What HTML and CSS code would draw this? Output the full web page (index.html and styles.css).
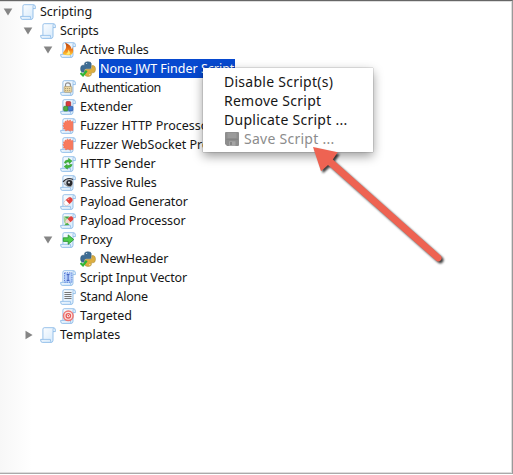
FILE: index.html
```html
<!DOCTYPE html>
<html lang="en">
<head>
<meta charset="utf-8">
<title>Scripting</title>
<link rel="stylesheet" href="styles.css">
</head>
<body>
<svg class="defs" aria-hidden="true">
  <defs>
    <linearGradient id="paper" x1="0" y1="0" x2="1" y2="1">
      <stop offset="0" stop-color="#ffffff"/><stop offset="1" stop-color="#d3e8fb"/>
    </linearGradient>
    <linearGradient id="flame" x1="0" y1="0" x2="0" y2="1">
      <stop offset="0" stop-color="#b8440c"/><stop offset=".55" stop-color="#f07818"/><stop offset="1" stop-color="#ffd23a"/>
    </linearGradient>
    <symbol id="scroll" viewBox="0 0 16 16">
      <path d="M4.2 .7H13.6Q15.5 .8 15.4 3.2V4.6H13V13.4Q12.9 15.4 11 15.4H2.2Q.5 15.3 .6 12.4H2.9V2.2Q2.9 .8 4.2 .7Z" fill="url(#paper)" stroke="#8dbbe8" stroke-width=".9"/>
      <path d="M13 4.6V2.4Q13 1 13.9 .9M3 12.4H10.4Q10.2 15 11.4 15.2" fill="none" stroke="#8dbbe8" stroke-width=".8"/>
    </symbol>
    <symbol id="open" viewBox="0 0 10 8"><path d="M.7 .5H9.3L5 7.6Z" fill="#858585"/></symbol>
    <symbol id="closed" viewBox="0 0 8 10"><path d="M.5 .7V9.3L7.6 5Z" fill="#858585"/></symbol>
    <symbol id="python" viewBox="0 0 16 16">
      <path d="M4.6 2.2Q4.8 .7 7.8 .7Q11.2 .7 11.2 2.6V6.2Q11.2 7.8 9.6 7.8H6Q4.4 7.8 4.4 9.4V11.2H2.5Q.6 11 .6 7.8Q.6 4.4 2.8 4.2H4.6Z" fill="#3f6d94" stroke="#315674" stroke-width=".5"/>
      <path d="M11.8 4.6H13.4Q15.5 5 15.5 8Q15.5 11.6 13.2 11.8H11.4V13.6Q11.2 15.5 8 15.5Q4.8 15.4 4.8 13.3V10Q4.8 8.3 6.6 8.3H10.2Q11.8 8.2 11.8 6.6Z" fill="#dcae40" stroke="#a98a38" stroke-width=".5"/>
      <circle cx="6.6" cy="2.5" r=".6" fill="#dfe9f2"/><circle cx="9.8" cy="13.7" r=".6" fill="#fff3bd"/>
      <path d="M.6 12L3 14.4L6.7 9.8" fill="none" stroke="#2fb535" stroke-width="2.2"/>
    </symbol>
    <symbol id="fire" viewBox="0 0 16 16"><path d="M5 .6Q11.6 3.5 11.3 7.2Q12.2 6.5 12 5Q14.8 10 11.6 12.4Q8 14 3.6 12.6Q2 11.3 4 9.2Q7.9 6 5 .6Z" fill="url(#flame)"/><path d="M5.8 12.2Q8.8 10 8 7.4Q11.4 10.7 9 12.6Z" fill="#ffeb78"/></symbol>
    <symbol id="lock" viewBox="0 0 16 16"><path d="M5.5 7V5.2Q5.5 2.8 8 2.8Q10.5 2.8 10.5 5.2V7" fill="none" stroke="#8e8e8e" stroke-width="1.2"/><rect x="4.2" y="6.6" width="7.6" height="5.6" rx=".7" fill="#efdba4" stroke="#aa946a" stroke-width=".7"/><path d="M5 8.5H11M5 10.4H11" stroke="#9c8c68" stroke-width=".8" stroke-dasharray="1.2 .8"/></symbol>
    <symbol id="blocks" viewBox="0 0 16 16"><rect x="6" y="2.5" width="4.7" height="4.8" rx="1" fill="#d93c3c" stroke="#96252a" stroke-width=".6"/><rect x="3.6" y="7.3" width="4.4" height="4.7" rx="1" fill="#4dae43" stroke="#28742a" stroke-width=".6"/><rect x="8.4" y="7.3" width="4.5" height="4.7" rx="1" fill="#477bd0" stroke="#284d98" stroke-width=".6"/></symbol>
    <symbol id="burst" viewBox="0 0 16 16"><path d="M5 3.1L6.5 3.4L7.4 1.9L8.7 3.1L10.4 2L10.9 3.7L12.9 3.5V12.6H11L9.5 12.9L8 11.9L5.7 13L5.4 11.3L3.5 11L4.1 9.2L2.8 8L4 6.6L3.4 4.9L5 4.7Z" fill="#f8795c" stroke="#ea6950" stroke-width=".5"/></symbol>
    <symbol id="cycle" viewBox="0 0 16 16"><path d="M4.3 7Q4.8 3.7 8.4 3.9L8.5 2.3L12.2 5L9.2 7.7L8.9 6.1Q6.8 5.9 6 7.4ZM12.2 8.6Q11.4 12 7.6 11.8L7.4 13.2L4 10.6L7.1 8.2L7.4 9.6Q9.4 9.8 10.1 8.2Z" fill="#41b53b" stroke="#278b2b" stroke-width=".4"/></symbol>
    <symbol id="eye" viewBox="0 0 16 16"><path d="M3.2 6.6Q7.5 1.8 12.9 5.1V11Q8 13.2 4.2 9.5Z" fill="#c3c8cf"/><path d="M3 6.8Q7.2 1.7 13.1 4.5" fill="none" stroke="#303036" stroke-width="1.1"/><circle cx="9.4" cy="8" r="3.1" fill="#27282d"/><circle cx="9" cy="7.5" r="1.1" fill="#d9dce0"/><path d="M4 8.6Q7 12 11.5 11.7" fill="none" stroke="#777" stroke-width=".7"/></symbol>
    <symbol id="pill" viewBox="0 0 16 16"><g transform="rotate(-42 8 7.5)"><rect x="3.2" y="5" width="9.8" height="5.2" rx="2.6" fill="#fff" stroke="#cfa09e" stroke-width=".5"/><path d="M7.4 5H10.4Q13 5 13 7.6Q13 10.2 10.4 10.2H7.4Z" fill="#e33f3c"/><path d="M8.8 6.2H11" stroke="#ff9e95"/></g></symbol>
    <symbol id="pillgreen" viewBox="0 0 16 16"><path d="M3.5 3.2L9.5 9L6 12.5L4 9Z" fill="#a5d493"/><path d="M4 3.5H9.5L7.3 6.2Z" fill="#45a84a"/><g transform="rotate(-42 9 7.5)"><rect x="5" y="5.3" width="9" height="4.4" rx="2.2" fill="#f5d4ce"/><path d="M9 5.3H12Q14 5.5 14 7.5Q14 9.7 12 9.7H9Z" fill="#e1443f"/></g><path d="M4.1 12.3L9.5 12.1L7.2 9.8Z" fill="#4bad4b"/></symbol>
    <symbol id="forward" viewBox="0 0 16 16"><path d="M3.3 5.8H8.2V2.9L13.8 7.6L8.2 12.3V9.4H3.3Z" fill="#4fce4e" stroke="#23912c" stroke-width=".8"/></symbol>
    <symbol id="vector" viewBox="0 0 16 16"><rect x="4.5" y="2.8" width="7.4" height="9.4" fill="#b5d0fa" stroke="#4e74d6" stroke-width=".9" stroke-dasharray="1.3 1"/><path d="M6.7 4.6H9.5M8.1 4.6V10.4M6.7 10.4H9.5" stroke="#3550b6" stroke-width=".9" fill="none"/></symbol>
    <symbol id="lines" viewBox="0 0 16 16"><path d="M4.4 3.5H11.5M4.4 5.5H11.5M4.4 7.5H11.5M4.4 9.5H11.5" stroke="#777" stroke-width="1.1"/></symbol>
    <symbol id="target" viewBox="0 0 16 16"><circle cx="8.3" cy="7.8" r="4.8" fill="#fbe3e1" stroke="#ee7672" stroke-width="1.5"/><circle cx="8.3" cy="7.8" r="2.2" fill="#fff" stroke="#e75b58" stroke-width="1.3"/><circle cx="8.3" cy="7.8" r=".8" fill="#cf3f42"/></symbol>
  </defs>
</svg>
<main class="panel">
  <ul class="tree">
    <li class="row"><svg class="toggle"><use href="#open"/></svg><svg class="icon"><use href="#scroll"/></svg><span class="label wide">Scripting</span></li>
    <li class="row l1"><svg class="toggle"><use href="#open"/></svg><svg class="icon"><use href="#scroll"/></svg><span class="label">Scripts</span></li>
    <li class="row l2"><svg class="toggle"><use href="#open"/></svg><svg class="icon"><use href="#scroll"/><use href="#fire"/></svg><span class="label">Active Rules</span></li>
    <li class="row l3"><i class="toggle"></i><svg class="icon"><use href="#python"/></svg><span class="label wide selected">None JWT Finder Script</span></li>
    <li class="row l2"><i class="toggle"></i><svg class="icon"><use href="#scroll"/><use href="#lock"/></svg><span class="label tight">Authentication</span></li>
    <li class="row l2"><i class="toggle"></i><svg class="icon"><use href="#scroll"/><use href="#blocks"/></svg><span class="label wide">Extender</span></li>
    <li class="row l2"><i class="toggle"></i><svg class="icon"><use href="#scroll"/><use href="#burst"/></svg><span class="label wide">Fuzzer HTTP Processor</span></li>
    <li class="row l2"><i class="toggle"></i><svg class="icon"><use href="#scroll"/><use href="#burst"/></svg><span class="label wide">Fuzzer WebSocket Processor</span></li>
    <li class="row l2"><i class="toggle"></i><svg class="icon"><use href="#scroll"/><use href="#cycle"/></svg><span class="label wide">HTTP Sender</span></li>
    <li class="row l2"><i class="toggle"></i><svg class="icon"><use href="#scroll"/><use href="#eye"/></svg><span class="label">Passive Rules</span></li>
    <li class="row l2"><i class="toggle"></i><svg class="icon"><use href="#scroll"/><use href="#pill"/></svg><span class="label">Payload Generator</span></li>
    <li class="row l2"><i class="toggle"></i><svg class="icon"><use href="#scroll"/><use href="#pillgreen"/></svg><span class="label">Payload Processor</span></li>
    <li class="row l2"><svg class="toggle"><use href="#open"/></svg><svg class="icon"><use href="#scroll"/><use href="#forward"/></svg><span class="label">Proxy</span></li>
    <li class="row l3"><i class="toggle"></i><svg class="icon"><use href="#python"/></svg><span class="label">NewHeader</span></li>
    <li class="row l2"><i class="toggle"></i><svg class="icon"><use href="#scroll"/><use href="#vector"/></svg><span class="label">Script Input Vector</span></li>
    <li class="row l2"><i class="toggle"></i><svg class="icon"><use href="#scroll"/><use href="#lines"/></svg><span class="label snug">Stand Alone</span></li>
    <li class="row l2"><i class="toggle"></i><svg class="icon"><use href="#scroll"/><use href="#target"/></svg><span class="label wide">Targeted</span></li>
    <li class="row l1"><svg class="toggle shut"><use href="#closed"/></svg><svg class="icon"><use href="#scroll"/></svg><span class="label wide">Templates</span></li>
  </ul>
</main>
<ul class="menu">
  <li class="item">Disable Script(s)</li>
  <li class="item">Remove Script</li>
  <li class="item">Duplicate Script ...</li>
  <li class="item disabled"><svg class="disk" viewBox="0 0 14 14"><path d="M1 0H13Q14 0 14 1V13Q14 14 13 14H2L0 12V1Q0 0 1 0Z" fill="#8e8e8e"/><path d="M2.5 .8H11.5V6.3H2.5Z" fill="#9b9b9b"/><path d="M1 7.3H13" stroke="#7d7d7d" stroke-width=".8"/><path d="M4 9.3H10.5V14H4Z" fill="#a5a5a5"/><path d="M5 10H7V13H5Z" fill="#858585"/></svg>Save Script ...</li>
</ul>
<svg class="arrow" viewBox="0 0 145 130"><path d="M5 5L29.7 10.3L24.8 17.4L132.8 113.8Q134.5 116 132.8 118.3Q130.3 120.6 128 118.6L20 23L13 29.2Z" fill="#ee6352"/></svg>
</body>
</html>
```
FILE: styles.css
```css
* { box-sizing: border-box; }
body {
  margin: 0;
  width: 513px;
  height: 475px;
  overflow: hidden;
  background: #fff;
  color: #161616;
  font-family: "Noto Sans", "Open Sans", sans-serif;
  font-size: 12.5px;
}
ul { list-style: none; margin: 0; padding: 0; }
.defs { position: absolute; width: 0; height: 0; }
.panel {
  height: 474px;
  border-top: 1px solid #666;
  border-right: 1px solid #999;
  border-bottom: 1px solid #aaa;
  box-shadow: inset -1px 0 #ddd, inset 0 1px #ddd, inset 0 -1px #ddd;
  background: linear-gradient(90deg, #f7f7f7, #fff 32px);
}
.tree { padding: 1px 0 0 3px; }
.row { display: flex; align-items: center; height: 19px; }
.l1 { padding-left: 20px; }
.l2 { padding-left: 40px; }
.l3 { padding-left: 60px; }
.toggle { flex: none; width: 10px; height: 8px; margin-right: 7px; }
.shut { width: 8px; height: 10px; margin: 0 7px 0 2px; }
.icon { flex: none; width: 16px; height: 16px; }
.label { height: 19px; line-height: 20px; padding: 0 1px; margin-left: 3px; white-space: nowrap; letter-spacing: -.12px; }
.wide { letter-spacing: 0; }
.snug { letter-spacing: -.25px; }
.tight { letter-spacing: -.4px; }
.selected { background: #0749cf; color: #fff; }
.menu {
  position: absolute;
  left: 203px;
  top: 68px;
  width: 170px;
  height: 84px;
  padding: 4px 0 0 21px;
  background: #fff;
  font-size: 14px;
  letter-spacing: .26px;
  box-shadow: 0 0 1px rgba(0,0,0,.55), 0 4px 10px rgba(0,0,0,.4);
}
.item { display: flex; align-items: center; height: 19px; line-height: 19px; white-space: nowrap; }
.disabled { color: #8c8c8c; }
.disk { width: 14px; height: 14px; margin: 0 5px 0 1px; }
.arrow {
  position: absolute;
  left: 308px;
  top: 142px;
  width: 145px;
  height: 130px;
  filter: drop-shadow(2px 2px 1px rgba(0,0,0,.75));
}
```
